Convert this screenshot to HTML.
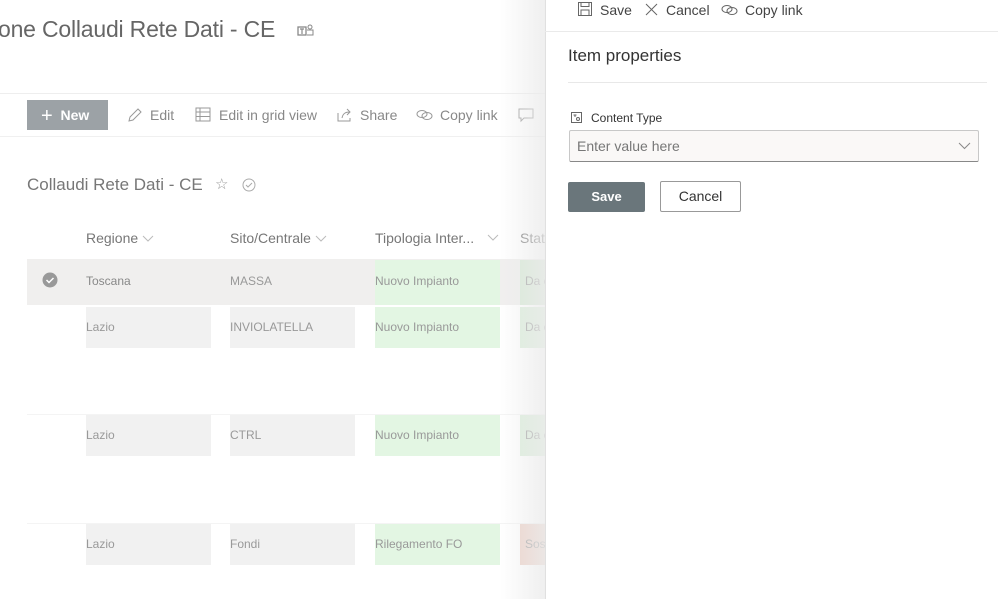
<!DOCTYPE html>
<html><head><meta charset="utf-8"><style>
*{margin:0;padding:0;box-sizing:border-box}
body{width:998px;height:599px;overflow:hidden;background:#fff;font-family:"Liberation Sans",sans-serif;position:relative;color:#333}
.a{position:absolute;white-space:nowrap}
.cell{position:absolute;height:41px;font-size:12px;color:#999;line-height:41px;white-space:nowrap;overflow:hidden}
.g{background:#f1f1f1}.gr{background:#e3f6e3}
.hdr{font-size:14px;color:#777}
.tb{font-size:14px;color:#888}
.chev{display:inline-block;vertical-align:middle;margin-left:4px}
</style></head><body>
<div class="a" style="left:-2px;top:16px;font-size:23px;color:#666;letter-spacing:-0.2px">one Collaudi Rete Dati - CE</div>
<svg class="a" style="left:297px;top:24px" width="18" height="14" viewBox="0 0 18 14"><rect x="1" y="3" width="8" height="8" fill="none" stroke="#888" stroke-width="1.3"/><path d="M3 5h4M5 5v5" stroke="#888" stroke-width="1.2"/><circle cx="13" cy="3" r="2" fill="none" stroke="#888"/><path d="M10 6h6v5h-6" fill="none" stroke="#888"/></svg>
<div class="a" style="left:0;top:93px;width:545px;height:1px;background:#eee"></div>
<div class="a" style="left:0;top:136px;width:545px;height:1px;background:#f0f0f0"></div>
<div class="a" style="left:27px;top:100px;width:81px;height:30px;background:#9ca2a6;color:#fff;font-weight:bold;font-size:14px;line-height:30px;padding-left:14px"><span style="font-size:20px;font-weight:normal;vertical-align:-2px">+</span>&nbsp; New</div>
<svg class="a" style="left:127px;top:107px" width="16" height="16"><path d="M2 14l1-4 8-8 3 3-8 8z" fill="none" stroke="#999"/></svg>
<div class="a tb" style="left:150px;top:107px">Edit</div>
<svg class="a" style="left:195px;top:107px" width="16" height="16"><rect x="1" y="1" width="14" height="13" fill="none" stroke="#999"/><path d="M1 5h14M1 9.5h14M5 1v13" stroke="#999"/></svg>
<div class="a tb" style="left:219px;top:107px">Edit in grid view</div>
<svg class="a" style="left:336px;top:107px" width="16" height="16"><path d="M2 6v8h12v-3M6 11c1-5 4-6 8-6M11 2l3 3-3 3" fill="none" stroke="#999"/></svg>
<div class="a tb" style="left:360px;top:107px">Share</div>
<svg class="a" style="left:416px;top:108px" width="18" height="14"><ellipse cx="6" cy="6" rx="5" ry="3.5" fill="none" stroke="#999"/><ellipse cx="11" cy="8" rx="5" ry="3.5" fill="none" stroke="#999"/></svg>
<div class="a tb" style="left:440px;top:107px">Copy link</div>
<svg class="a" style="left:518px;top:107px" width="16" height="16"><path d="M1 2h14v9H6l-3 3v-3H1z" fill="none" stroke="#999"/></svg>
<div class="a" style="left:27px;top:175px;font-size:17px;color:#777">Collaudi Rete Dati - CE</div>
<div class="a" style="left:215px;top:175px;font-size:15px;color:#999">☆</div>
<svg class="a" style="left:242px;top:178px" width="14" height="14"><circle cx="7" cy="7" r="6" fill="none" stroke="#aaa"/><path d="M4 7l2 2 4-4" fill="none" stroke="#aaa"/></svg>
<div class="a hdr" style="left:86px;top:230px">Regione<svg class="chev" width="12" height="8"><path d="M1 1l5 5 5-5" fill="none" stroke="#bbb"/></svg></div>
<div class="a hdr" style="left:230px;top:230px">Sito/Centrale<svg class="chev" width="12" height="8"><path d="M1 1l5 5 5-5" fill="none" stroke="#bbb"/></svg></div>
<div class="a hdr" style="left:375px;top:230px">Tipologia Inter...</div>
<svg class="a" style="left:487px;top:234px" width="12" height="8"><path d="M1 1l5 5 5-5" fill="none" stroke="#bbb"/></svg>
<div class="a hdr" style="left:520px;top:230px">Stato</div>
<div class="a" style="left:27px;top:259px;width:520px;height:46px;background:#f0efee"></div>
<svg class="a" style="left:42px;top:272px" width="16" height="16"><circle cx="8" cy="8" r="7.5" fill="#999"/><path d="M4.5 8l2.5 2.5 4.5-4.5" fill="none" stroke="#fff" stroke-width="1.5"/></svg>
<div class="cell" style="left:86px;top:260px;height:45px;line-height:43px;color:#888">Toscana</div>
<div class="cell" style="left:230px;top:260px;height:45px;line-height:43px">MASSA</div>
<div class="cell gr" style="left:375px;top:260px;width:125px;height:45px;line-height:43px">Nuovo Impianto</div>
<div class="cell" style="left:520px;top:260px;width:30px;height:45px;line-height:43px;padding-left:5px;background:#d7e9d6">Da e</div>
<div class="cell g" style="left:86px;top:307px;width:125px">Lazio</div>
<div class="cell g" style="left:230px;top:307px;width:125px">INVIOLATELLA</div>
<div class="cell gr" style="left:375px;top:307px;width:125px">Nuovo Impianto</div>
<div class="cell" style="left:520px;top:307px;width:30px;padding-left:5px;background:#dbeedb">Da e</div>
<div class="a" style="left:27px;top:414px;width:520px;height:1px;background:#f4f4f4"></div>
<div class="cell g" style="left:86px;top:415px;width:125px">Lazio</div>
<div class="cell g" style="left:230px;top:415px;width:125px">CTRL</div>
<div class="cell gr" style="left:375px;top:415px;width:125px">Nuovo Impianto</div>
<div class="cell" style="left:520px;top:415px;width:30px;padding-left:5px;background:#dbeedb">Da e</div>
<div class="a" style="left:27px;top:523px;width:520px;height:1px;background:#f4f4f4"></div>
<div class="cell g" style="left:86px;top:524px;width:125px">Lazio</div>
<div class="cell g" style="left:230px;top:524px;width:125px">Fondi</div>
<div class="cell gr" style="left:375px;top:524px;width:125px">Rilegamento FO</div>
<div class="cell" style="left:520px;top:524px;width:30px;padding-left:5px;background:#ecd2c9">Sosp</div>
<div class="a" style="left:500px;top:0;width:45px;height:599px;background:linear-gradient(to right,rgba(255,255,255,0),rgba(235,235,235,.8))"></div>
<div class="a" style="left:545px;top:0;width:453px;height:599px;background:#fff;border-left:1px solid #e0e0e0"></div>
<div class="a" style="left:545px;top:31px;width:453px;height:1px;background:#eaeaea"></div>
<svg class="a" style="left:578px;top:2px" width="14" height="14"><rect x=".5" y=".5" width="13" height="13" fill="none" stroke="#666"/><rect x="3" y="8" width="8" height="5.5" fill="none" stroke="#666"/><path d="M3 .5v4h8v-4" fill="none" stroke="#666"/></svg>
<div class="a" style="left:600px;top:2px;font-size:14px;color:#444">Save</div>
<svg class="a" style="left:645px;top:3px" width="13" height="13"><path d="M1 1l11 11M12 1L1 12" stroke="#666"/></svg>
<div class="a" style="left:666px;top:2px;font-size:14px;color:#444">Cancel</div>
<svg class="a" style="left:721px;top:4px" width="18" height="12"><ellipse cx="6" cy="5" rx="5" ry="3.5" fill="none" stroke="#666"/><ellipse cx="11" cy="7" rx="5" ry="3.5" fill="none" stroke="#666"/></svg>
<div class="a" style="left:745px;top:2px;font-size:14px;color:#444">Copy link</div>
<div class="a" style="left:568px;top:46px;font-size:17px;color:#333">Item properties</div>
<div class="a" style="left:568px;top:82px;width:419px;height:1px;background:#e8e8e8"></div>
<svg class="a" style="left:571px;top:112px" width="11" height="11"><rect x=".5" y=".5" width="10" height="10" fill="none" stroke="#666"/><path d="M2.5 3h3M4 3v2" stroke="#666"/><circle cx="7" cy="7" r="1.5" fill="none" stroke="#666"/></svg>
<div class="a" style="left:591px;top:111px;font-size:12px;color:#333">Content Type</div>
<div class="a" style="left:569px;top:130px;width:410px;height:32px;background:#faf8f7;border:1px solid #c8c8c8;border-bottom:1px solid #888;border-radius:2px;font-size:14px;color:#777;line-height:30px;padding-left:7px">Enter value here</div>
<svg class="a" style="left:958px;top:142px" width="13" height="8"><path d="M1 1l5.5 5.5 5.5-5.5" fill="none" stroke="#888"/></svg>
<div class="a" style="left:568px;top:182px;width:77px;height:30px;background:#6a767b;color:#fff;font-weight:bold;font-size:13px;line-height:30px;text-align:center;border-radius:2px">Save</div>
<div class="a" style="left:660px;top:181px;width:81px;height:31px;border:1px solid #999;color:#333;font-size:14px;line-height:29px;text-align:center;border-radius:2px">Cancel</div>
</body></html>
